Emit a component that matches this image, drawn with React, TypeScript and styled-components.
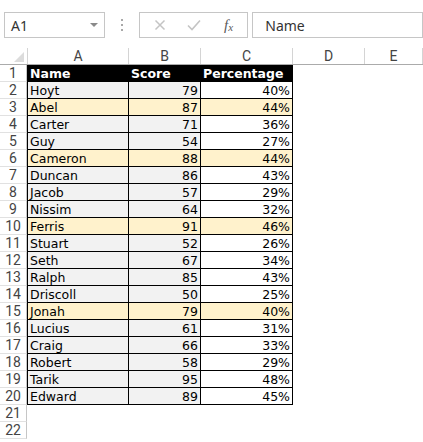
import styled, { createGlobalStyle } from 'styled-components';

const GlobalStyle = createGlobalStyle`
  html, body {
    margin: 0;
    padding: 0;
    background: #ffffff;
  }
`;

const Page = styled.div`
  width: 423px;
  height: 442px;
  overflow: hidden;
  background: #ffffff;
`;

// formula bar
const Toolbar = styled.div`
  display: flex;
  align-items: center;
  gap: 4px;
  padding: 12px 0 0 4px;
  height: 26px;
`;

const NameBox = styled.div`
  position: relative;
  box-sizing: border-box;
  width: 102px;
  height: 26px;
  border: 1px solid #c6c6c6;
  padding-left: 6px;
  display: flex;
  align-items: center;
  font-family: 'Noto Sans', 'Open Sans', sans-serif;
  font-size: 14px;
  color: #333;
`;

const DropArrow = styled.span`
  position: absolute;
  right: 6px;
  top: 10px;
  width: 0;
  height: 0;
  border-left: 4px solid transparent;
  border-right: 4px solid transparent;
  border-top: 4px solid #8a8a8a;
`;

const Grip = styled.div`
  width: 26px;
  height: 26px;
  display: flex;
  flex-direction: column;
  align-items: center;
  justify-content: center;
  gap: 3px;
`;

const Dot = styled.span`
  width: 2px;
  height: 2px;
  background: #a8a8a8;
`;

const ButtonBox = styled.div`
  box-sizing: border-box;
  width: 110px;
  height: 26px;
  border: 1px solid #c6c6c6;
  display: flex;
  align-items: center;
  padding-left: 10px;
  gap: 14px;
`;

const IconButton = styled.span`
  width: 20px;
  height: 20px;
  display: flex;
  align-items: center;
  justify-content: center;
`;

const Fx = styled.span`
  font-family: 'Liberation Serif', serif;
  font-style: italic;
  font-size: 15px;
  color: #5a5a5a;
  margin-left: 6px;

  sub {
    font-size: 11px;
    vertical-align: -1px;
  }
`;

const FormulaInput = styled.div`
  box-sizing: border-box;
  width: 172px;
  height: 26px;
  border: 1px solid #c6c6c6;
  padding-left: 12px;
  display: flex;
  align-items: center;
  font-family: 'Noto Sans', 'Open Sans', sans-serif;
  font-size: 14px;
  color: #333;
`;

// sheet
const Sheet = styled.div`
  margin-top: 10px;
`;

const HeaderRow = styled.div`
  display: flex;
  height: 16px;
  border-bottom: 1px solid #ababab;
`;

const Corner = styled.div`
  position: relative;
  box-sizing: border-box;
  width: 28px;
  border-right: 1px solid #d4d4d4;
`;

const CornerMark = styled.span`
  position: absolute;
  right: 3px;
  bottom: 2px;
  width: 0;
  height: 0;
  border-left: 10px solid transparent;
  border-bottom: 10px solid #dcdcdc;
`;

const ColHead = styled.div<{ $w: number }>`
  box-sizing: border-box;
  width: ${(p) => p.$w}px;
  flex-shrink: 0;
  border-right: 1px solid #d4d4d4;
  display: flex;
  align-items: center;
  justify-content: center;
  font-family: Roboto, 'Noto Sans', sans-serif;
  font-size: 14px;
  color: #444;
  line-height: 16px;
`;

const Row = styled.div`
  display: flex;
  height: 17px;
`;

const RowHead = styled.div`
  box-sizing: border-box;
  width: 27px;
  flex-shrink: 0;
  border-right: 1px solid #c6c6c6;
  border-bottom: 1px solid #e1e1e1;
  display: flex;
  align-items: center;
  justify-content: center;
  font-family: Roboto, 'Noto Sans', sans-serif;
  font-size: 14px;
  line-height: 16px;
  color: #444;
`;

type Tone = 'head' | 'gray' | 'white' | 'gold';

const fills: Record<Tone, string> = {
  head: '#000000',
  gray: '#f2f2f2',
  white: '#ffffff',
  gold: '#fff2cc',
};

const Cell = styled.div<{ $w: number; $tone: Tone; $right?: boolean; $first?: boolean }>`
  box-sizing: border-box;
  width: ${(p) => p.$w}px;
  flex-shrink: 0;
  background: ${(p) => fills[p.$tone]};
  border-right: 1px solid #000;
  border-bottom: 1px solid #000;
  ${(p) => (p.$first ? 'border-left: 1px solid #000;' : '')}
  padding: 1px ${(p) => (p.$right ? 2 : 1)}px 0 ${(p) => (p.$right ? 1 : 2)}px;
  display: flex;
  align-items: center;
  justify-content: ${(p) => (p.$right ? 'flex-end' : 'flex-start')};
  font-family: 'DejaVu Sans', Verdana, sans-serif;
  font-size: 12.5px;
  line-height: 15px;
  font-weight: ${(p) => (p.$tone === 'head' ? 700 : 400)};
  color: ${(p) => (p.$tone === 'head' ? '#ffffff' : '#000000')};
  white-space: nowrap;
  overflow: hidden;
`;

const data: [string, number][] = [
  ['Hoyt', 79],
  ['Abel', 87],
  ['Carter', 71],
  ['Guy', 54],
  ['Cameron', 88],
  ['Duncan', 86],
  ['Jacob', 57],
  ['Nissim', 64],
  ['Ferris', 91],
  ['Stuart', 52],
  ['Seth', 67],
  ['Ralph', 85],
  ['Driscoll', 50],
  ['Jonah', 79],
  ['Lucius', 61],
  ['Craig', 66],
  ['Robert', 58],
  ['Tarik', 95],
  ['Edward', 89],
];

const highlighted = ['Abel', 'Cameron', 'Ferris', 'Jonah'];

const CrossIcon = () => (
  <svg width="12" height="12" viewBox="0 0 12 12">
    <path d="M1.5 1.5 L10.5 10.5 M10.5 1.5 L1.5 10.5" stroke="#c4c4c4" strokeWidth="1.5" fill="none" />
  </svg>
);

const CheckIcon = () => (
  <svg width="14" height="12" viewBox="0 0 14 12">
    <path d="M1 6.5 L5 10.5 L13 1.5" stroke="#c4c4c4" strokeWidth="1.6" fill="none" />
  </svg>
);

const App = () => {
  return (
    <Page>
      <GlobalStyle />
      <Toolbar>
        <NameBox>
          A1
          <DropArrow />
        </NameBox>
        <Grip>
          <Dot />
          <Dot />
          <Dot />
        </Grip>
        <ButtonBox>
          <IconButton>
            <CrossIcon />
          </IconButton>
          <IconButton>
            <CheckIcon />
          </IconButton>
          <Fx>
            f<sub>x</sub>
          </Fx>
        </ButtonBox>
        <FormulaInput>Name</FormulaInput>
      </Toolbar>

      <Sheet>
        <HeaderRow>
          <Corner>
            <CornerMark />
          </Corner>
          <ColHead $w={101}>A</ColHead>
          <ColHead $w={72}>B</ColHead>
          <ColHead $w={92}>C</ColHead>
          <ColHead $w={72}>D</ColHead>
          <ColHead $w={58}>E</ColHead>
        </HeaderRow>

        <Row>
          <RowHead>1</RowHead>
          <Cell $w={102} $tone="head" $first>Name</Cell>
          <Cell $w={72} $tone="head">Score</Cell>
          <Cell $w={92} $tone="head">Percentage</Cell>
        </Row>

        {data.map(([name, score], i) => {
          const gold = highlighted.includes(name);
          const pct = Math.round(score / 2);
          return (
            <Row key={name}>
              <RowHead>{i + 2}</RowHead>
              <Cell $w={102} $tone={gold ? 'gold' : 'gray'} $first>
                {name}
              </Cell>
              <Cell $w={72} $tone={gold ? 'gold' : 'gray'} $right>
                {score}
              </Cell>
              <Cell $w={92} $tone={gold ? 'gold' : 'white'} $right>
                {pct}%
              </Cell>
            </Row>
          );
        })}

        <Row>
          <RowHead>21</RowHead>
        </Row>
        <Row>
          <RowHead>22</RowHead>
        </Row>
      </Sheet>
    </Page>
  );
};

export default App;
